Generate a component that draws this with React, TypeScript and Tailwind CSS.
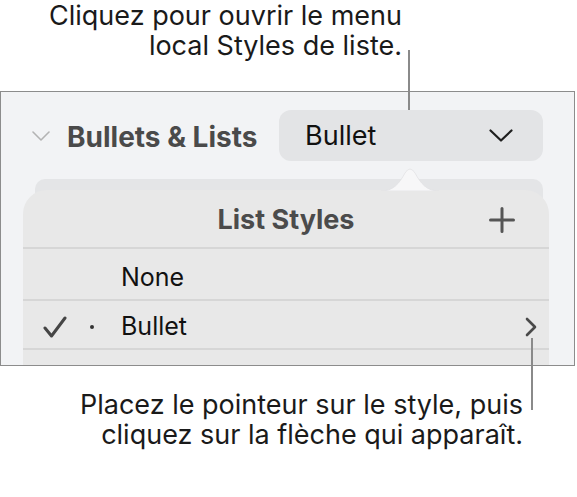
export default function App() {
  return (
    <div className="relative w-[577px] h-[497px] bg-white overflow-hidden font-['Inter',sans-serif] text-[#1a1a1a]">
      {/* Top callout */}
      <div className="h-[91px] w-[402px] pt-[1px] text-right text-[27px] leading-[30px]">
        <p>Cliquez pour ouvrir le menu</p>
        <p>local Styles de liste.</p>
      </div>

      {/* Inspector panel */}
      <div className="w-[575px] h-[275px] border border-[#8c8c8c] bg-[#f2f3f5] overflow-hidden">
        {/* Section header */}
        <div className="flex items-center h-[51px] mt-[18px] pl-[31px] pr-[31px]">
          <svg width="18" height="10" viewBox="0 0 18 10" fill="none">
            <path d="M1 1 L9 9 L17 1" stroke="#b3b3b3" strokeWidth="1.6" strokeLinecap="round" strokeLinejoin="round" />
          </svg>
          <span className="ml-[17px] pt-[2px] text-[28px] font-bold text-[#4a4a4a]">Bullets &amp; Lists</span>
          <div className="ml-auto w-[264px] h-[51px] shrink-0 rounded-[12px] bg-[#e3e4e6] flex items-center pl-[26px] pr-[30px]">
            <span className="pt-[2px] text-[27px] text-[#111]">Bullet</span>
            <svg className="ml-auto" width="24" height="13" viewBox="0 0 24 13" fill="none">
              <path d="M1.5 1.5 L12 11.5 L22.5 1.5" stroke="#1f1f1f" strokeWidth="2.2" strokeLinecap="round" strokeLinejoin="round" />
            </svg>
          </div>
        </div>

        {/* Card under popover */}
        <div className="mt-[18px] ml-[34px] w-[508px] h-[200px] rounded-t-[10px] bg-[#e4e5e7] pt-[11px]">
          {/* Popover */}
          <div className="-ml-[12px] w-[526px] h-[200px] rounded-t-[24px] bg-[#e8e8e8]">
            <div className="flex items-center h-[59px] pt-[3px] border-b-2 border-[#d6d6d6]">
              <div className="w-[60px]" />
              <div className="flex-1 text-center text-[27px] font-bold text-[#4b4b4b]">List Styles</div>
              <div className="w-[60px] flex justify-end pr-[34px]">
                <svg width="26" height="26" viewBox="0 0 26 26" fill="none">
                  <path d="M13 1.5 V24.5 M1.5 13 H24.5" stroke="#555" strokeWidth="3" strokeLinecap="round" />
                </svg>
              </div>
            </div>
            <div className="flex items-center h-[52px] pt-[8px] pl-[98px] border-b-2 border-[#d6d6d6]">
              <span className="text-[25px] text-[#111]">None</span>
            </div>
            <div className="flex items-center h-[49px] pt-[4px] pl-[20px] pr-[12px] border-b-2 border-[#d6d6d6]">
              <svg width="24" height="22" viewBox="0 0 24 22" fill="none">
                <path d="M2 12 L8.5 20 L22 2" stroke="#454545" strokeWidth="3" strokeLinecap="round" strokeLinejoin="round" />
              </svg>
              <span className="ml-[23px] w-[4px] h-[4px] rounded-full bg-[#333]" />
              <span className="ml-[27px] text-[25px] text-[#111]">Bullet</span>
              <svg className="ml-auto" width="12" height="20" viewBox="0 0 12 20" fill="none">
                <path d="M2 2 L10 10 L2 18" stroke="#4a4a4a" strokeWidth="2.6" strokeLinecap="round" strokeLinejoin="round" />
              </svg>
            </div>
          </div>
        </div>
      </div>

      {/* Bottom callout */}
      <div className="mt-[24px] w-[523px] text-right text-[27px] leading-[30px]">
        <p>Placez le pointeur sur le style, puis</p>
        <p>cliquez sur la flèche qui apparaît.</p>
      </div>

      {/* Popover arrow */}
      <svg className="absolute left-[381px] top-[166px]" width="58" height="25" viewBox="0 0 58 25" fill="none">
        <path d="M0 25 C12 25 18 18 24 7 Q29 -1 34 7 C40 18 46 25 58 25 Z" fill="#f7f7f8" stroke="#e2e2e4" strokeWidth="0.8" />
      </svg>

      {/* Leader lines */}
      <div className="absolute left-[408px] top-[50px] w-[2px] h-[60px] bg-[#8a8a8a]" />
      <div className="absolute left-[531px] top-[338px] w-[2px] h-[72px] bg-[#8a8a8a]" />
    </div>
  );
}
